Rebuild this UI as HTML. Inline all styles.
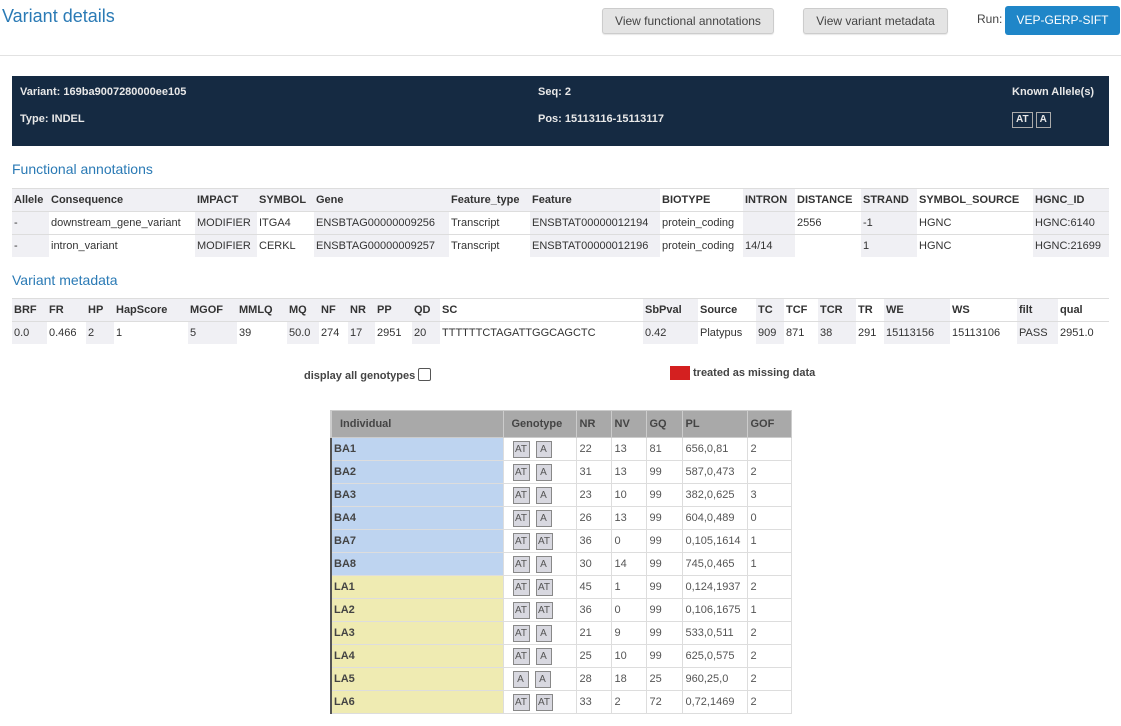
<!DOCTYPE html>
<html><head><meta charset="utf-8"><style>
body{margin:0;width:1121px;height:726px;overflow:hidden;background:#fff;font-family:"Liberation Sans",Arial,sans-serif;color:#333;position:relative}
.a{position:absolute}
h1{position:absolute;left:2px;top:6px;margin:0;font-weight:normal;font-size:18px;color:#2a7ab5}
.btn{position:absolute;top:8px;height:24px;border:1px solid #ccc;border-radius:3px;background:#e4e4e4;font-size:12px;color:#444;text-align:center;line-height:24px;box-shadow:0 1px 1px rgba(0,0,0,.1)}
.hr{position:absolute;left:0;top:55px;width:1121px;height:1px;background:#e2e2e2}
.ban{position:absolute;left:12px;top:76px;width:1097px;height:70px;background:#152a42;color:#e8e8e8;font-size:11px;font-weight:bold}
.ban div{position:absolute}
.al{display:inline-block;border:1px solid #aaa;padding:1px 3px;font-size:10px;line-height:12px}
h2{position:absolute;margin:0;font-weight:normal;font-size:14px;color:#2a7ab5;left:12px}
table{position:absolute;border-collapse:collapse;table-layout:fixed;font-size:11px}
.t td{height:22px;padding:0 2px;border-top:1px solid #ddd;white-space:nowrap;overflow:hidden}
.t tr:first-child td{font-weight:bold;background:#f0f0f4}
.t tr:first-child{border-top:1px solid #ddd}
.t td.g{background:#f0f0f4}
.t tr:first-child td.w{background:#fff}
.gt td{height:22px;border:1px solid #ddd;padding:0 3px;font-size:11px;color:#555}
.gt tr:first-child td{background:#a9a9a9;color:#444;font-weight:bold;height:26px;border-color:#ccc}
.gt td:first-child{border-left:2px solid #555;font-weight:bold;color:#444;padding-left:2px}
.b td:first-child{background:#bed4f0}
.y td:first-child{background:#efebb2}
.k{display:inline-block;border:1px solid #888;background:#d8d8e0;font-size:10px;width:14px;height:15px;line-height:15px;text-align:center;color:#555;margin-left:6px}
.k.t{width:15px}
</style></head><body>
<h1>Variant details</h1>
<div class="btn" style="left:602px;width:170px">View functional annotations</div>
<div class="btn" style="left:803px;width:143px">View variant metadata</div>
<div class="a" style="left:977px;top:12px;font-size:12px;color:#444">Run:</div>
<div class="a" style="left:1005px;top:6px;width:115px;height:29px;background:#1f86c8;border-radius:3px;color:#fff;font-size:12px;text-align:center;line-height:29px">VEP-GERP-SIFT</div>
<div class="hr"></div>
<div class="ban">
<div style="left:8px;top:10px">Variant: 169ba9007280000ee105</div>
<div style="left:8px;top:37px">Type: INDEL</div>
<div style="left:526px;top:10px">Seq: 2</div>
<div style="left:526px;top:37px">Pos: 15113116-15113117</div>
<div style="left:1000px;top:10px">Known Allele(s)</div>
<div style="left:1000px;top:36px"><span class="al">AT</span> <span class="al">A</span></div>
</div>
<h2 style="top:161px">Functional annotations</h2>
<table class="t" style="left:12px;top:188px;width:1097px">
<colgroup><col style="width:37px"><col style="width:146px"><col style="width:62px"><col style="width:57px"><col style="width:135px"><col style="width:81px"><col style="width:130px"><col style="width:83px"><col style="width:52px"><col style="width:66px"><col style="width:56px"><col style="width:116px"><col style="width:76px"></colgroup>
<tr><td class="g">Allele</td><td>Consequence</td><td class="g">IMPACT</td><td>SYMBOL</td><td class="g">Gene</td><td>Feature_type</td><td class="g">Feature</td><td class="w">BIOTYPE</td><td class="g">INTRON</td><td class="w">DISTANCE</td><td class="g">STRAND</td><td class="w">SYMBOL_SOURCE</td><td class="g">HGNC_ID</td></tr>
<tr><td class="g">-</td><td>downstream_gene_variant</td><td class="g">MODIFIER</td><td>ITGA4</td><td class="g">ENSBTAG00000009256</td><td>Transcript</td><td class="g">ENSBTAT00000012194</td><td>protein_coding</td><td class="g"></td><td>2556</td><td class="g">-1</td><td>HGNC</td><td class="g">HGNC:6140</td></tr>
<tr><td class="g">-</td><td>intron_variant</td><td class="g">MODIFIER</td><td>CERKL</td><td class="g">ENSBTAG00000009257</td><td>Transcript</td><td class="g">ENSBTAT00000012196</td><td>protein_coding</td><td class="g">14/14</td><td></td><td class="g">1</td><td>HGNC</td><td class="g">HGNC:21699</td></tr>
</table>
<h2 style="top:272px">Variant metadata</h2>
<table class="t" style="left:12px;top:298px;width:1097px">
<colgroup><col style="width:35px"><col style="width:39px"><col style="width:28px"><col style="width:74px"><col style="width:49px"><col style="width:50px"><col style="width:32px"><col style="width:29px"><col style="width:27px"><col style="width:37px"><col style="width:28px"><col style="width:203px"><col style="width:55px"><col style="width:58px"><col style="width:28px"><col style="width:34px"><col style="width:38px"><col style="width:28px"><col style="width:66px"><col style="width:67px"><col style="width:41px"><col style="width:51px"></colgroup>
<tr><td class="g">BRF</td><td>FR</td><td class="g">HP</td><td>HapScore</td><td class="g">MGOF</td><td>MMLQ</td><td class="g">MQ</td><td>NF</td><td class="g">NR</td><td>PP</td><td class="g">QD</td><td class="w">SC</td><td class="g">SbPval</td><td class="w">Source</td><td class="g">TC</td><td class="w">TCF</td><td class="g">TCR</td><td class="w">TR</td><td class="g">WE</td><td class="w">WS</td><td class="g">filt</td><td class="w">qual</td></tr>
<tr><td class="g">0.0</td><td>0.466</td><td class="g">2</td><td>1</td><td class="g">5</td><td>39</td><td class="g">50.0</td><td>274</td><td class="g">17</td><td>2951</td><td class="g">20</td><td>TTTTTTCTAGATTGGCAGCTC</td><td class="g">0.42</td><td>Platypus</td><td class="g">909</td><td>871</td><td class="g">38</td><td>291</td><td class="g">15113156</td><td>15113106</td><td class="g">PASS</td><td>2951.0</td></tr>
</table>
<div class="a" style="left:304px;top:368px;font-size:11px;font-weight:bold;color:#444">display all genotypes <span style="display:inline-block;width:11px;height:11px;border:1px solid #555;border-radius:2px;vertical-align:-2px"></span></div>
<div class="a" style="left:670px;top:366px;width:20px;height:14px;background:#d42020"></div>
<div class="a" style="left:693px;top:367px;font-size:11px;font-weight:bold;color:#444">treated as missing data</div>
<table class="gt" style="left:330px;top:410px;width:460px">
<colgroup><col style="width:172px"><col style="width:73px"><col style="width:35px"><col style="width:35px"><col style="width:36px"><col style="width:65px"><col style="width:44px"></colgroup>
<tr><td style="padding-left:8px">Individual</td><td style="padding-left:8px">Genotype</td><td>NR</td><td>NV</td><td>GQ</td><td>PL</td><td>GOF</td></tr>
<tr class="b"><td>BA1</td><td><span class="k t">AT</span><span class="k">A</span></td><td>22</td><td>13</td><td>81</td><td>656,0,81</td><td>2</td></tr>
<tr class="b"><td>BA2</td><td><span class="k t">AT</span><span class="k">A</span></td><td>31</td><td>13</td><td>99</td><td>587,0,473</td><td>2</td></tr>
<tr class="b"><td>BA3</td><td><span class="k t">AT</span><span class="k">A</span></td><td>23</td><td>10</td><td>99</td><td>382,0,625</td><td>3</td></tr>
<tr class="b"><td>BA4</td><td><span class="k t">AT</span><span class="k">A</span></td><td>26</td><td>13</td><td>99</td><td>604,0,489</td><td>0</td></tr>
<tr class="b"><td>BA7</td><td><span class="k t">AT</span><span class="k t">AT</span></td><td>36</td><td>0</td><td>99</td><td>0,105,1614</td><td>1</td></tr>
<tr class="b"><td>BA8</td><td><span class="k t">AT</span><span class="k">A</span></td><td>30</td><td>14</td><td>99</td><td>745,0,465</td><td>1</td></tr>
<tr class="y"><td>LA1</td><td><span class="k t">AT</span><span class="k t">AT</span></td><td>45</td><td>1</td><td>99</td><td>0,124,1937</td><td>2</td></tr>
<tr class="y"><td>LA2</td><td><span class="k t">AT</span><span class="k t">AT</span></td><td>36</td><td>0</td><td>99</td><td>0,106,1675</td><td>1</td></tr>
<tr class="y"><td>LA3</td><td><span class="k t">AT</span><span class="k">A</span></td><td>21</td><td>9</td><td>99</td><td>533,0,511</td><td>2</td></tr>
<tr class="y"><td>LA4</td><td><span class="k t">AT</span><span class="k">A</span></td><td>25</td><td>10</td><td>99</td><td>625,0,575</td><td>2</td></tr>
<tr class="y"><td>LA5</td><td><span class="k">A</span><span class="k">A</span></td><td>28</td><td>18</td><td>25</td><td>960,25,0</td><td>2</td></tr>
<tr class="y"><td>LA6</td><td><span class="k t">AT</span><span class="k t">AT</span></td><td>33</td><td>2</td><td>72</td><td>0,72,1469</td><td>2</td></tr>
</table>
</body></html>
